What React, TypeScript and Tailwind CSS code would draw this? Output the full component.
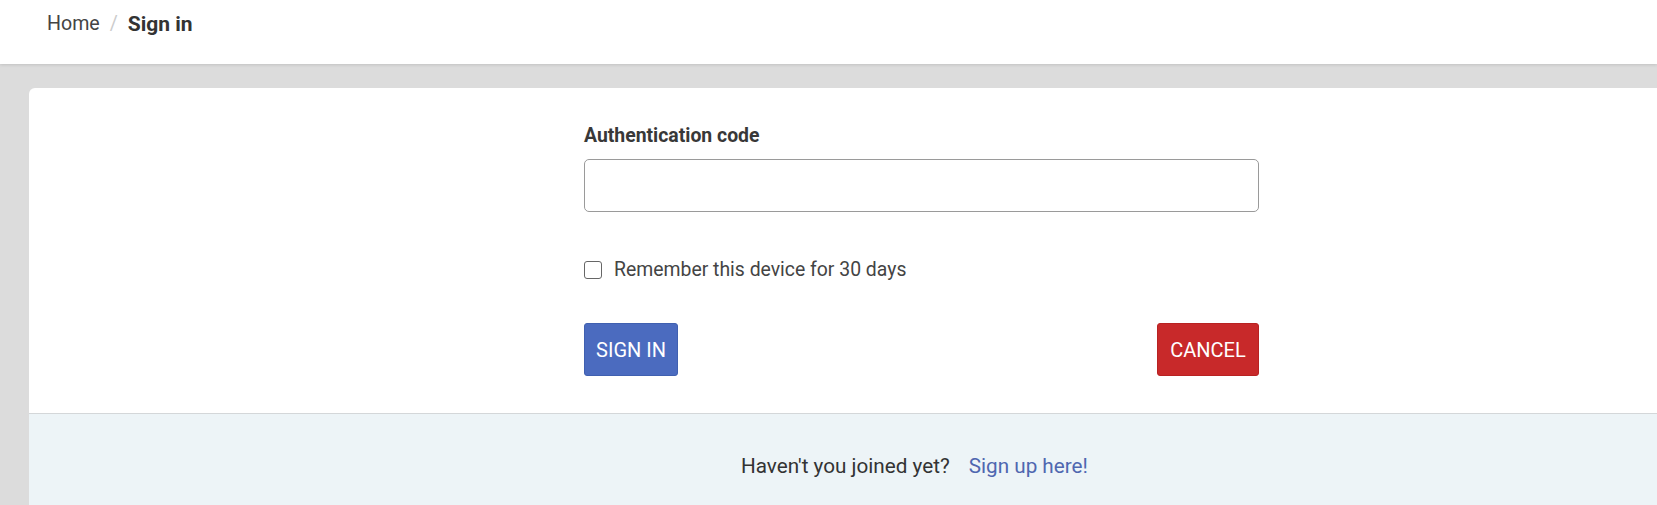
import React from 'react';

const App = () => {
  return (
    <div className="w-[1657px] h-[505px] overflow-hidden bg-[#dcdcdc] font-['Roboto',sans-serif] text-[#333333]">
      {/* Breadcrumb bar */}
      <header className="relative z-10 h-[64px] bg-white shadow-[0_1px_3px_rgba(0,0,0,0.12)]">
        <nav className="flex items-center pl-[47px] pt-[12px] text-[19.6px] leading-[24px]">
          <a className="text-[#444444]">Home</a>
          <span className="mx-[10px] text-[#cccccc]">/</span>
          <span className="font-bold text-[21px] text-[#333333]">Sign in</span>
        </nav>
      </header>

      <main className="pt-[24px] pl-[29px]">
        <div className="w-[1786px] bg-white rounded-tl-[6px] overflow-hidden">
          <form className="ml-[555px] w-[675px] pt-[36px] pb-[37px]">
            <label className="block text-[19.4px] leading-[24px] font-bold text-[#383838] mb-[11px]">
              Authentication code
            </label>
            <input
              type="text"
              className="block w-full h-[53px] rounded-[5px] border border-[#9a9a9a] bg-white px-3 text-[20px] outline-none"
            />

            <label className="flex items-center gap-[12px] mt-[46px] text-[19.4px] leading-[24px] text-[#444444]">
              <span className="w-[18px] h-[18px] rounded-[3px] border border-[#666666] bg-white" />
              Remember this device for 30 days
            </label>

            <div className="flex justify-between mt-[41px]">
              <button
                type="button"
                className="h-[53px] w-[94px] rounded-[3px] bg-[#4b6bbf] text-white text-[20px] border border-[#4060b0]"
              >
                SIGN IN
              </button>
              <button
                type="button"
                className="h-[53px] w-[102px] rounded-[3px] bg-[#c8292a] text-white text-[20px] border border-[#b82222]"
              >
                CANCEL
              </button>
            </div>
          </form>

          <div className="border-t border-[#d4d7d9] bg-[#edf4f7] h-[120px] pt-[40px]">
            <p className="ml-[712px] text-[20.7px] leading-[24px] text-[#333333]">
              Haven't you joined yet?
              <a className="ml-[19px] text-[#4f67b0]">Sign up here!</a>
            </p>
          </div>
        </div>
      </main>
    </div>
  );
};

export default App;
